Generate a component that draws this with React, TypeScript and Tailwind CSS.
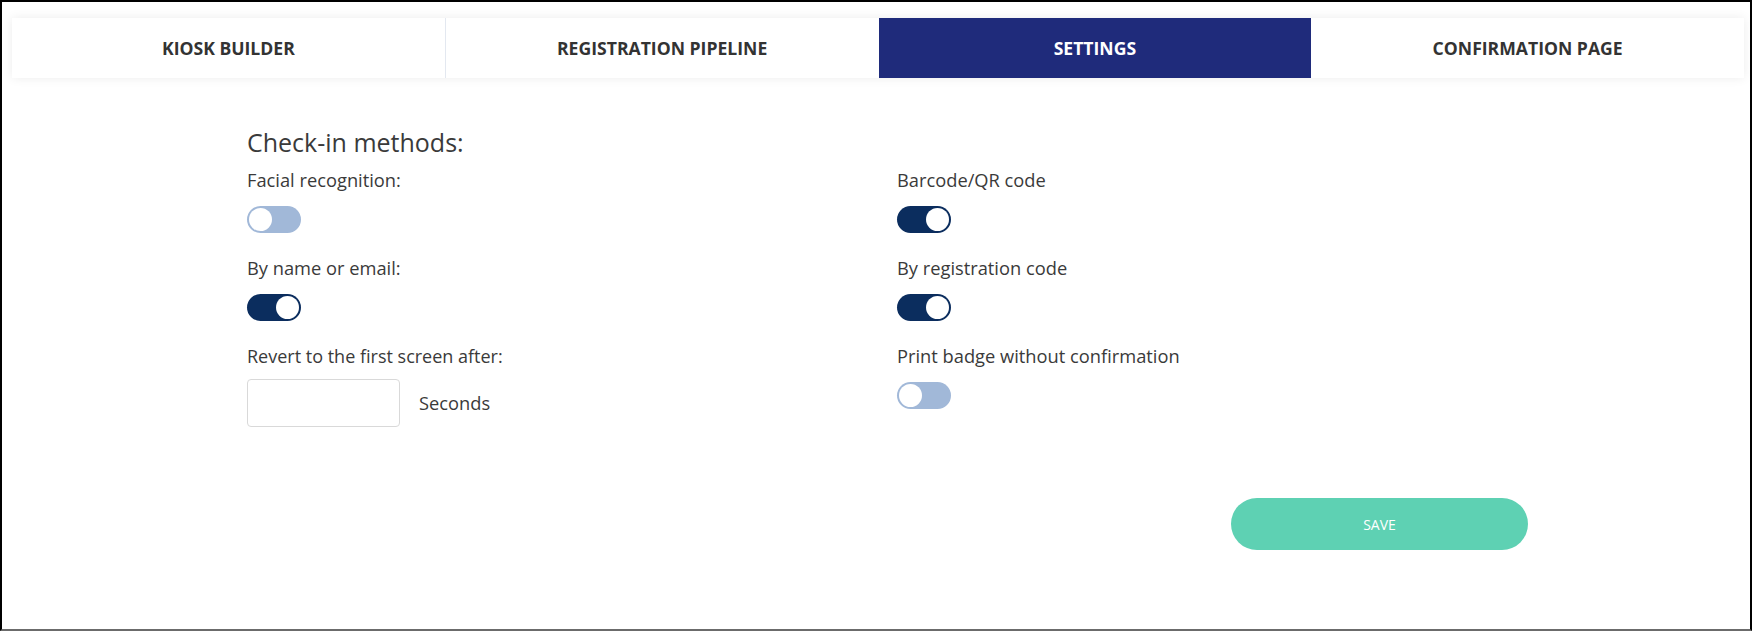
import React, { useState } from 'react';

const TABS = ["KIOSK BUILDER", "REGISTRATION PIPELINE", "SETTINGS", "CONFIRMATION PAGE"];

function Toggle({ on, onChange }: { on: boolean; onChange: () => void }) {
  return (
    <button
      onClick={onChange}
      className={`flex items-center w-[54px] h-[27px] rounded-full p-[2px] ${on ? "bg-[#0b2d5e] justify-end" : "bg-[#a1b8d8] justify-start"}`}
    >
      <span className="block w-[23px] h-[23px] rounded-full bg-white" />
    </button>
  );
}

function Field({ label, on, onChange }: { label: string; on: boolean; onChange: () => void }) {
  return (
    <div className="flex flex-col items-start h-[88px]">
      <p className="text-[18.3px] leading-[24px] text-[#3a3a3a]">{label}</p>
      <div className="mt-[14px]">
        <Toggle on={on} onChange={onChange} />
      </div>
    </div>
  );
}

export default function App() {
  const [flags, setFlags] = useState({
    facial: false,
    name: true,
    barcode: true,
    regCode: true,
    print: false,
  });
  const flip = (k: keyof typeof flags) => setFlags((p) => ({ ...p, [k]: !p[k] }));

  return (
    <div className="w-[1752px] h-[631px] border-2 border-black border-b-[#6b6b6b] bg-white font-['Open_Sans',sans-serif] overflow-hidden">
      {/* tabs */}
      <div className="mt-4 ml-[10px] w-[1732px] h-[60px] flex bg-white shadow-[0_0_10px_rgba(0,0,0,0.08)]">
        {TABS.map((t, i) => (
          <div
            key={t}
            className={`flex-1 flex items-center justify-center text-[17.6px] font-bold ${
              t === "SETTINGS" ? "bg-[#1f2b7b] text-white" : "text-[#333]"
            } ${i === 0 ? "border-r border-[#e3e8f0]" : ""}`}
          >
            {t}
          </div>
        ))}
      </div>

      {/* content */}
      <div className="ml-[245px] w-[1281px] mt-[48px]">
        <h2 className="text-[25px] leading-[32px] text-[#3a3a3a]">Check-in methods:</h2>
        <div className="grid grid-cols-[650px_1fr] mt-[10px]">
          <div className="flex flex-col">
            <Field label="Facial recognition:" on={flags.facial} onChange={() => flip("facial")} />
            <Field label="By name or email:" on={flags.name} onChange={() => flip("name")} />
            <div className="flex flex-col">
              <p className="text-[18px] leading-[24px] text-[#3a3a3a]">Revert to the first screen after:</p>
              <div className="flex items-center mt-[11px] gap-[19px]">
                <input className="w-[153px] h-[48px] border border-[#d9d9d9] rounded-[4px] outline-none px-2 text-[16px]" />
                <span className="text-[18.3px] text-[#3a3a3a]">Seconds</span>
              </div>
            </div>
          </div>
          <div className="flex flex-col">
            <Field label="Barcode/QR code" on={flags.barcode} onChange={() => flip("barcode")} />
            <Field label="By registration code" on={flags.regCode} onChange={() => flip("regCode")} />
            <Field label="Print badge without confirmation" on={flags.print} onChange={() => flip("print")} />
          </div>
        </div>
        <div className="flex justify-end mt-[66px]">
          <button className="w-[297px] h-[52px] rounded-full bg-[#5ed1b3] text-white text-[14px]">SAVE</button>
        </div>
      </div>
    </div>
  );
}
